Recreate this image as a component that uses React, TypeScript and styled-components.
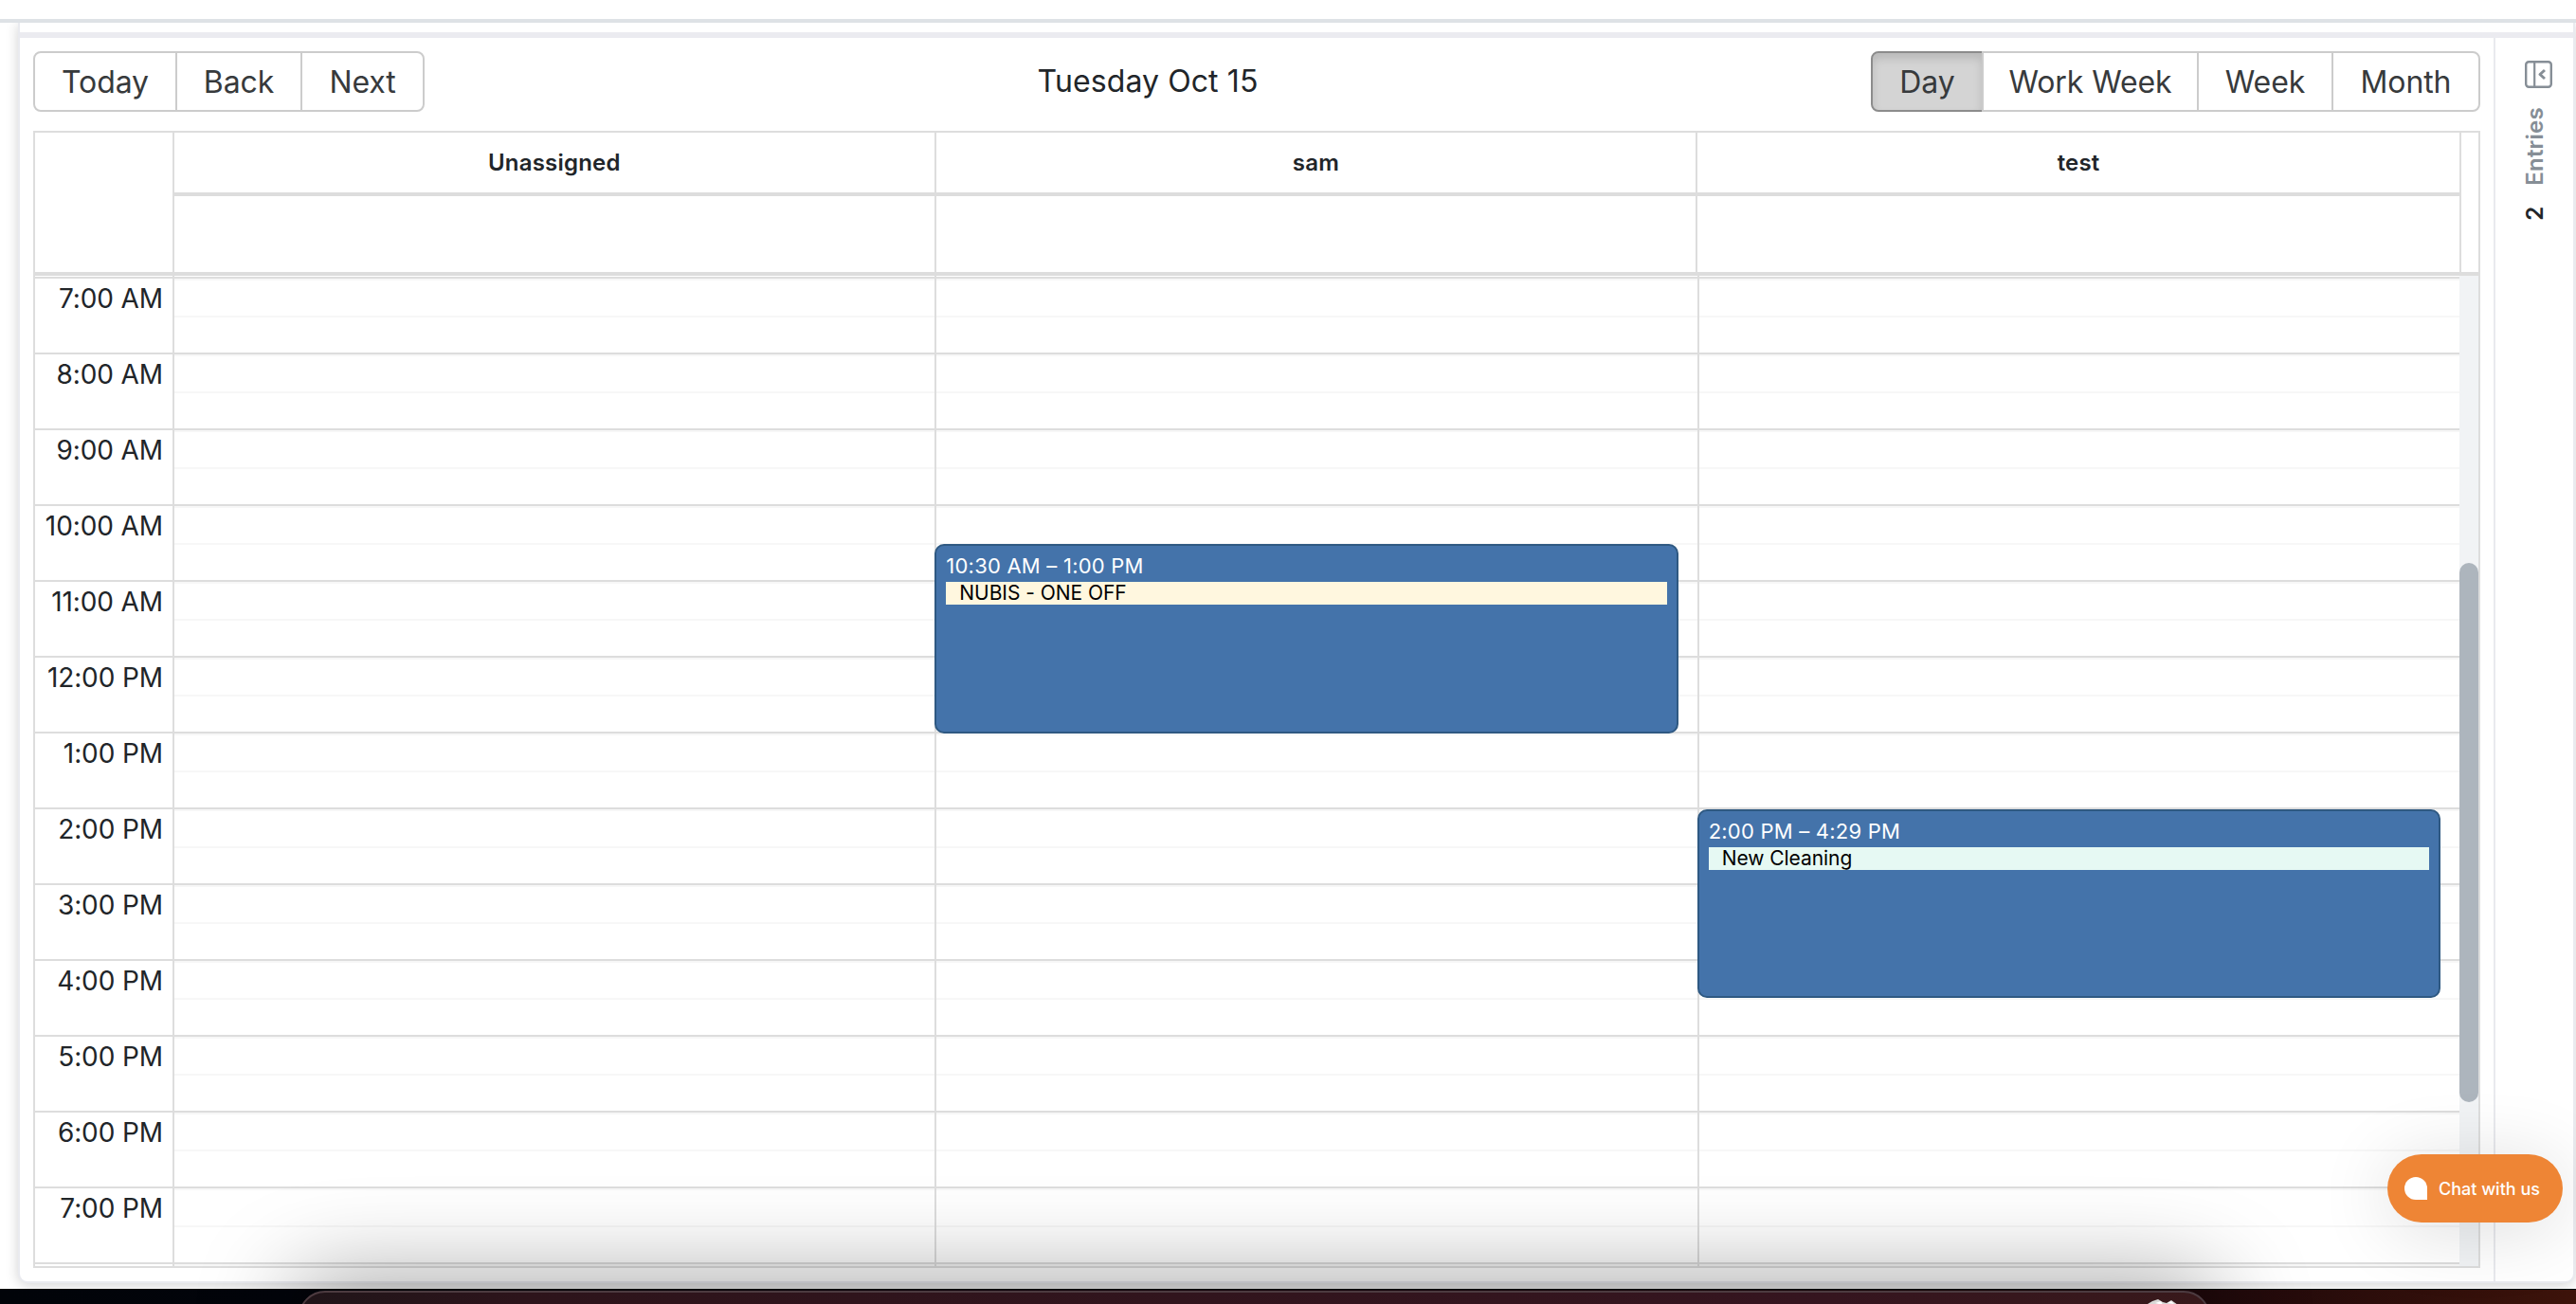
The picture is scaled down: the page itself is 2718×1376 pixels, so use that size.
import styled, { createGlobalStyle } from "styled-components";

const GlobalStyle = createGlobalStyle`
  * {
    box-sizing: border-box;
  }

  body {
    margin: 0;
    overflow: hidden;
    background-color: #fff;
    color: #212529;
    font-family: Inter, "Liberation Sans", sans-serif;
  }
`;

const Screen = styled.div`
  position: relative;
  width: 2718px;
  height: 1376px;
  overflow: hidden;
  display: flex;
  flex-direction: column;
`;

const TopBar = styled.div`
  flex: none;
  height: 24px;
  border-bottom: 4px solid #dee2e6;
  background-color: #fff;
`;

const Content = styled.div`
  height: 1336px;
  overflow: hidden;
  padding: 0 1px 6px 19px;
`;

const Card = styled.main`
  height: 1330px;
  display: flex;
  flex-direction: column;
  border: 2px solid #e9eaef;
  border-top: none;
  border-radius: 0 0 10px 10px;
  box-shadow: 0 2px 14px rgba(0, 0, 0, 0.18);
  background-color: #fff;
`;

const CardStrip = styled.div`
  flex: none;
  height: 16px;
  border-bottom: 6px solid #ebebf0;
`;

const CardBody = styled.div`
  flex: 1;
  min-height: 0;
  display: flex;
`;

const Calendar = styled.section`
  width: 2610px;
  padding: 14px 14px;
  display: flex;
  flex-direction: column;
`;

const Toolbar = styled.header`
  flex: none;
  display: flex;
  align-items: center;
  height: 64px;
  margin-bottom: 20px;
`;

const ToolbarLabel = styled.span`
  flex-grow: 1;
  font-size: 32px;
  letter-spacing: 0.1px;
  line-height: 48px;
  text-align: center;
`;

const ButtonGroup = styled.div`
  display: flex;
`;

const ToolbarButton = styled.button<{ $width: number; $active?: boolean }>`
  width: ${(props) => props.$width}px;
  height: 64px;
  padding: 0;
  border: 2px solid ${(props) => (props.$active ? "#8c8c8c" : "#ccc")};
  background-color: ${(props) => (props.$active ? "#d4d4d4" : "#fff")};
  box-shadow: ${(props) =>
    props.$active ? "inset 0 6px 10px rgba(0, 0, 0, 0.125)" : "none"};
  color: #373a3c;
  font-family: inherit;
  font-size: 32px;
  letter-spacing: -0.1px;
  white-space: nowrap;

  &:not(:first-child) {
    margin-left: -2px;
  }

  &:first-child {
    border-radius: 8px 0 0 8px;
  }

  &:last-child {
    border-radius: 0 8px 8px 0;
  }
`;

const TimeView = styled.div`
  width: 2582px;
  flex: 1;
  min-height: 0;
  display: flex;
  flex-direction: column;
  border: 2px solid #ddd;
`;

const TimeHeader = styled.div`
  flex: none;
  display: flex;
  height: 151px;
  border-bottom: 4px solid #ddd;
`;

const HeaderGutter = styled.div`
  flex: none;
  width: 145px;
`;

const HeaderColumns = styled.div`
  width: 2415px;
  display: flex;
  border-right: 2px solid #ddd;
`;

const HeaderColumn = styled.div`
  width: 803.6px;
  border-left: 2px solid #ddd;

  &:last-child {
    flex: 1;
  }
`;

const HeaderName = styled.div`
  height: 67px;
  border-bottom: 4px solid #ddd;
  font-size: 24px;
  font-weight: 600;
  letter-spacing: 0.2px;
  line-height: 64px;
  text-align: center;
`;

const TimeContent = styled.div`
  flex: 1;
  min-height: 0;
  display: flex;
  overflow: hidden;
`;

const Gutter = styled.div`
  flex: none;
  width: 145px;
  padding-top: 1px;
`;

const GutterHour = styled.div`
  height: 80px;
  border-top: 2px solid #ddd;
  padding-right: 10px;
  font-size: 28px;
  letter-spacing: -0.1px;
  line-height: 42px;
  text-align: right;
  white-space: nowrap;
`;

const DayColumn = styled.div`
  position: relative;
  flex: 1;
  padding-top: 1px;
  border-left: 2px solid #ddd;
`;

const HourGroup = styled.div`
  height: 80px;
  display: flex;
  flex-direction: column;
  border-top: 2px solid #ddd;
`;

const HalfHour = styled.div`
  flex: 1;
  border-top: 2px solid #f7f7f7;
`;

const EventBox = styled.article<{ $top: number; $height: number }>`
  position: absolute;
  top: ${(props) => props.$top}px;
  left: -2px;
  right: 20px;
  height: ${(props) => props.$height}px;
  padding: 4px 10px;
  border: 2px solid #2f5982;
  border-radius: 10px;
  background-color: #4473aa;
  color: #fff;
`;

const EventTime = styled.div`
  height: 34px;
  font-size: 22px;
  letter-spacing: 0.22px;
  line-height: 34px;
`;

const EventTitle = styled.div<{ $color: string }>`
  height: 24px;
  padding-left: 14px;
  background-color: ${(props) => props.$color};
  color: #000;
  font-size: 21px;
  letter-spacing: -0.05px;
  line-height: 23px;
`;

const ScrollTrack = styled.div`
  flex: none;
  width: 20px;
  padding-top: 303px;
  background-color: #f1f3f5;
`;

const ScrollThumb = styled.div`
  height: 569px;
  border-radius: 10px;
  background-color: #adb5bd;
`;

const Sidebar = styled.aside`
  flex: 1;
  display: flex;
  flex-direction: column;
  align-items: center;
  padding-top: 22px;
  border-left: 2px solid #e9eaee;
  color: #868e96;
`;

const CollapseIcon = styled.svg`
  flex: none;
  width: 32px;
  height: 32px;
  margin-left: 8px;
`;

const SidebarLabel = styled.div`
  display: flex;
  gap: 22px;
  margin: 19px 0 0 1px;
  font-size: 24px;
  font-weight: 600;
  letter-spacing: 0.2px;
  line-height: 36px;
  writing-mode: vertical-rl;
  transform: rotate(180deg);
`;

const SidebarCount = styled.span`
  color: #212529;
`;

const ChatButton = styled.button`
  position: absolute;
  top: 1218px;
  left: 2519px;
  width: 185px;
  height: 72px;
  display: flex;
  align-items: center;
  gap: 12px;
  padding: 0 0 0 18px;
  border: none;
  border-radius: 36px;
  background-color: #ee8535;
  box-shadow: 0 8px 80px rgba(0, 0, 0, 0.14);
  color: #fff;
  font-family: inherit;
  font-size: 18px;
  font-weight: 500;
  white-space: nowrap;
`;

const ChatBubble = styled.span`
  width: 24px;
  height: 24px;
  border-radius: 12px 12px 0 12px;
  background-color: #fff;
`;

const DesktopStrip = styled.div`
  position: relative;
  flex: none;
  height: 16px;
  padding: 1px 386px 0 315px;
  background: linear-gradient(
    90deg,
    #010409 0%,
    #02040a 11%,
    #1c0710 45%,
    #1d080b 85%,
    #3d130a 100%
  );
  border-top: 1px solid #000;
`;

const Dock = styled.div`
  height: 60px;
  display: flex;
  justify-content: flex-end;
  padding: 7px 32px 0 0;
  border: 2px solid #4c3b40;
  border-radius: 28px;
  background: linear-gradient(90deg, #201519, #2d141b 12%, #35151f 80%, #38191b);
  box-shadow: 0 0 100px 10px rgba(0, 0, 0, 0.4);
`;

const hours = [
  "7:00 AM",
  "8:00 AM",
  "9:00 AM",
  "10:00 AM",
  "11:00 AM",
  "12:00 PM",
  "1:00 PM",
  "2:00 PM",
  "3:00 PM",
  "4:00 PM",
  "5:00 PM",
  "6:00 PM",
  "7:00 PM",
  "",
];

interface CalendarEvent {
  time: string;
  title: string;
  color: string;
  top: number;
  height: number;
}

interface Resource {
  name: string;
  events: CalendarEvent[];
}

const resources: Resource[] = [
  { name: "Unassigned", events: [] },
  {
    name: "sam",
    events: [
      {
        time: "10:30 AM – 1:00 PM",
        title: "NUBIS - ONE OFF",
        color: "#fff7df",
        top: 283,
        height: 200,
      },
    ],
  },
  {
    name: "test",
    events: [
      {
        time: "2:00 PM – 4:29 PM",
        title: "New Cleaning",
        color: "#e6f9f3",
        top: 563,
        height: 199,
      },
    ],
  },
];

const PanelIcon = () => (
  <CollapseIcon
    viewBox="0 0 32 32"
    fill="none"
    stroke="#868e96"
    strokeLinejoin="round"
  >
    <rect x="3.2" y="3.2" width="26.6" height="26.6" rx="3" strokeWidth="2.4" />
    <path d="M12.2 3.2v26.6" strokeWidth="2.2" />
    <path d="M23 12l-5 4.5 5 4.5" strokeWidth="3" />
  </CollapseIcon>
);

const TrashIcon = () => (
  <svg width="32" height="30" viewBox="0 0 32 30">
    <path d="M0 5l5-3 6-2 5 3 4 1 5-3 7 5v24H0z" fill="#d8d8d6" />
    <path d="M8 4l6-2 2 4zM21 4l4-2 3 3z" fill="#fff" />
  </svg>
);

export default function App() {
  return (
    <>
      <GlobalStyle />
      <Screen>
        <TopBar />
        <Content>
          <Card>
            <CardStrip />
            <CardBody>
              <Calendar>
                <Toolbar>
                  <ButtonGroup>
                    <ToolbarButton $width={152}>Today</ToolbarButton>
                    <ToolbarButton $width={134}>Back</ToolbarButton>
                    <ToolbarButton $width={131}>Next</ToolbarButton>
                  </ButtonGroup>
                  <ToolbarLabel>Tuesday Oct 15</ToolbarLabel>
                  <ButtonGroup>
                    <ToolbarButton $width={119} $active>
                      Day
                    </ToolbarButton>
                    <ToolbarButton $width={229}>Work Week</ToolbarButton>
                    <ToolbarButton $width={144}>Week</ToolbarButton>
                    <ToolbarButton $width={157}>Month</ToolbarButton>
                  </ButtonGroup>
                </Toolbar>
                <TimeView>
                  <TimeHeader>
                    <HeaderGutter />
                    <HeaderColumns>
                      {resources.map((resource) => (
                        <HeaderColumn key={resource.name}>
                          <HeaderName>{resource.name}</HeaderName>
                        </HeaderColumn>
                      ))}
                    </HeaderColumns>
                  </TimeHeader>
                  <TimeContent>
                    <Gutter>
                      {hours.map((hour) => (
                        <GutterHour key={hour}>{hour}</GutterHour>
                      ))}
                    </Gutter>
                    {resources.map((resource) => (
                      <DayColumn key={resource.name}>
                        {hours.map((hour) => (
                          <HourGroup key={hour}>
                            <HalfHour />
                            <HalfHour />
                          </HourGroup>
                        ))}
                        {resource.events.map((event) => (
                          <EventBox
                            key={event.title}
                            $top={event.top}
                            $height={event.height}
                          >
                            <EventTime>{event.time}</EventTime>
                            <EventTitle $color={event.color}>
                              {event.title}
                            </EventTitle>
                          </EventBox>
                        ))}
                      </DayColumn>
                    ))}
                    <ScrollTrack>
                      <ScrollThumb />
                    </ScrollTrack>
                  </TimeContent>
                </TimeView>
              </Calendar>
              <Sidebar>
                <PanelIcon />
                <SidebarLabel>
                  <SidebarCount>2</SidebarCount>
                  <span>Entries</span>
                </SidebarLabel>
              </Sidebar>
            </CardBody>
          </Card>
        </Content>
        <DesktopStrip>
          <Dock>
            <TrashIcon />
          </Dock>
        </DesktopStrip>
        <ChatButton>
          <ChatBubble />
          Chat with us
        </ChatButton>
      </Screen>
    </>
  );
}
